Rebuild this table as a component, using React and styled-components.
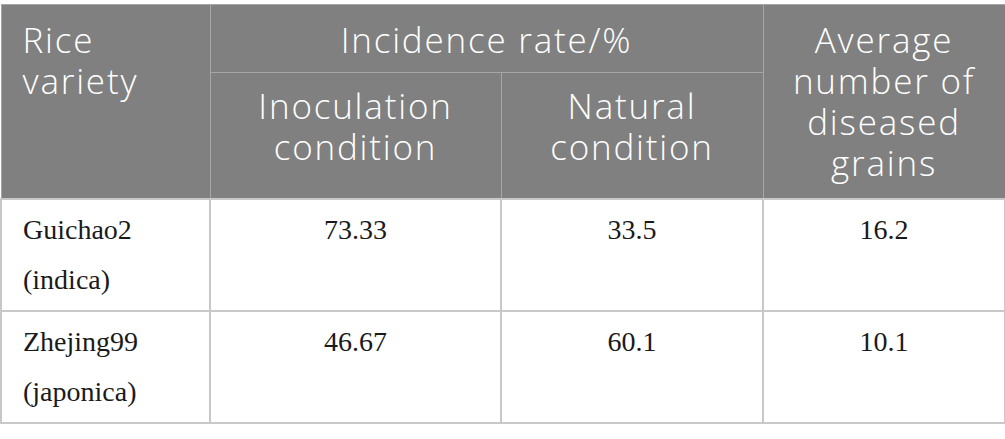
import React from 'react';
import styled, { createGlobalStyle } from 'styled-components';

const GlobalStyle = createGlobalStyle`
  html, body {
    margin: 0;
    padding: 0;
    background: #ffffff;
  }
  body {
    padding-top: 4px;
  }
`;

const Table = styled.table`
  border-collapse: collapse;
  table-layout: fixed;
  width: 1004px;
`;

const HeadRow = styled.tr`
  height: ${(p) => p.$h}px;
`;

const HeadCell = styled.th`
  background: #808080;
  color: #ffffff;
  font-family: "Open Sans", "Liberation Sans", sans-serif;
  font-weight: 300;
  font-size: 35px;
  letter-spacing: 1.8px;
  line-height: 41px;
  text-align: ${(p) => (p.$left ? 'left' : 'center')};
  vertical-align: top;
  padding: ${(p) => p.$pad || '14px 21px 6px'};
  border: 1px solid #a6a6a6;
`;

const Cell = styled.td`
  font-family: "Liberation Serif", "Times New Roman", serif;
  font-size: 28px;
  line-height: 50px;
  color: #1a1a1a;
  text-align: ${(p) => (p.$left ? 'left' : 'center')};
  vertical-align: top;
  padding: 5px 21px 5px;
  border: 2px solid #c8c8c8;
`;

const rows = [
  { name: 'Guichao2 (indica)', a: '73.33', b: '33.5', c: '16.2' },
  { name: 'Zhejing99 (japonica)', a: '46.67', b: '60.1', c: '10.1' },
];

export default function App() {
  return (
    <>
      <GlobalStyle />
      <Table>
        <colgroup>
          <col style={{ width: 209 }} />
          <col style={{ width: 291 }} />
          <col style={{ width: 262 }} />
          <col style={{ width: 242 }} />
        </colgroup>
        <thead>
          <HeadRow $h={68}>
            <HeadCell rowSpan={2} $left>
              Rice variety
            </HeadCell>
            <HeadCell colSpan={2}>Incidence rate/%</HeadCell>
            <HeadCell rowSpan={2} $pad="14px 8px 6px">
              Average number of diseased grains
            </HeadCell>
          </HeadRow>
          <HeadRow $h={126}>
            <HeadCell $pad="12px 8px 6px">Inoculation condition</HeadCell>
            <HeadCell $pad="12px 8px 6px">Natural condition</HeadCell>
          </HeadRow>
        </thead>
        <tbody>
          {rows.map((r) => (
            <tr key={r.name}>
              <Cell $left>{r.name}</Cell>
              <Cell>{r.a}</Cell>
              <Cell>{r.b}</Cell>
              <Cell>{r.c}</Cell>
            </tr>
          ))}
        </tbody>
      </Table>
    </>
  );
}
